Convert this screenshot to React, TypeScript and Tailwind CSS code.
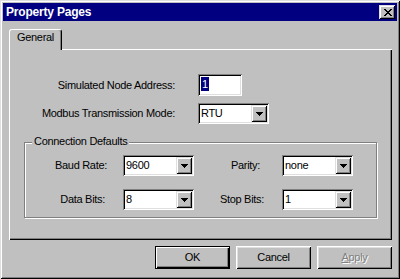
import React from "react";

const sunken =
  "shadow-[inset_1px_1px_0_#808080,inset_-1px_-1px_0_#ffffff,inset_2px_2px_0_#000000,inset_-2px_-2px_0_#dfdfdf]";
const raised =
  "shadow-[inset_1px_1px_0_#dfdfdf,inset_-1px_-1px_0_#000000,inset_2px_2px_0_#ffffff,inset_-2px_-2px_0_#808080]";
const btnBevel =
  "shadow-[inset_1px_1px_0_#ffffff,inset_-1px_-1px_0_#000000,inset_2px_2px_0_#dfdfdf,inset_-2px_-2px_0_#808080]";

function Tri() {
  return (
    <svg width="7" height="4" viewBox="0 0 7 4" shapeRendering="crispEdges">
      <rect x="0" y="0" width="7" height="1" fill="#000" />
      <rect x="1" y="1" width="5" height="1" fill="#000" />
      <rect x="2" y="2" width="3" height="1" fill="#000" />
      <rect x="3" y="3" width="1" height="1" fill="#000" />
    </svg>
  );
}

function CloseX() {
  const rows = [
    [0, 1, 6, 7],
    [1, 2, 5, 6],
    [2, 3, 4, 5],
    [3, 4],
    [2, 3, 4, 5],
    [1, 2, 5, 6],
    [0, 1, 6, 7],
  ];
  return (
    <svg width="8" height="7" viewBox="0 0 8 7" shapeRendering="crispEdges">
      {rows.map((r, y) =>
        r.map((x) => <rect key={`${x}-${y}`} x={x} y={y} width="1" height="1" fill="#000" />)
      )}
    </svg>
  );
}

function Combo({ value }: { value: string }) {
  return (
    <div className={`flex h-[21px] w-[71px] shrink-0 bg-white p-[2px] ${sunken}`}>
      <div className="flex-1 pl-[1px] leading-[17px]">{value}</div>
      <div className={`flex h-full w-[16px] items-center justify-center bg-[#c0c0c0] ${raised}`}>
        <Tri />
      </div>
    </div>
  );
}

export default function App() {
  return (
    <div
      className={`flex h-[279px] w-[400px] flex-col bg-[#c0c0c0] p-[3px] font-['Liberation_Sans',Arial,sans-serif] text-[11px] tracking-[-0.3px] text-black ${raised}`}
    >
      {/* Title bar */}
      <div className="flex h-[18px] items-center bg-[#000080] pl-[3px] pr-[2px]">
        <span className="flex-1 text-[12px] font-bold leading-[18px] tracking-[-0.2px] text-white">
          Property Pages
        </span>
        <div className={`flex h-[14px] w-[16px] items-center justify-center bg-[#c0c0c0] pl-[1px] ${raised}`}>
          <CloseX />
        </div>
      </div>

      <div className="ml-[6px] mt-[8px] flex w-[383px] flex-col">
        {/* Tab */}
        <div className="relative z-10 -mb-px h-[21px] w-[53px] rounded-t-[3px] border-l border-r border-t border-l-white border-r-black border-t-white bg-[#c0c0c0] pt-[1px] text-center leading-[13px] shadow-[inset_-1px_0_0_#808080]">
          General
        </div>

        {/* Panel */}
        <div className="flex h-[191px] flex-col pt-[25px] shadow-[inset_1px_1px_0_#ffffff,inset_-1px_-1px_0_#000000,inset_-2px_-2px_0_#808080]">
          <div className="flex h-[22px] items-center">
            <div className="w-[166px] text-right">Simulated Node Address:</div>
            <div className={`ml-[23px] h-[22px] w-[44px] bg-white p-[2px] ${sunken}`}>
              <span className="ml-[1px] inline-block h-[14px] bg-[#000080] px-[1px] leading-[14px] text-white">
                1
              </span>
            </div>
          </div>
          <div className="mt-[7px] flex h-[21px] items-center">
            <div className="w-[166px] text-right">Modbus Transmission Mode:</div>
            <div className="ml-[23px]">
              <Combo value="RTU" />
            </div>
          </div>

          {/* Group box */}
          <div className="relative ml-[15px] mt-[18px] h-[76px] w-[353px] border border-[#808080] pt-[12px] shadow-[inset_1px_1px_0_#ffffff,1px_1px_0_#ffffff]">
            <div className="absolute left-[7px] top-[-8px] bg-[#c0c0c0] px-[2px] leading-[13px]">
              Connection Defaults
            </div>
            <div className="flex h-[21px] items-center">
              <div className="w-[82px] text-right">Baud Rate:</div>
              <div className="ml-[16px]">
                <Combo value="9600" />
              </div>
              <div className="w-[66px] text-right">Parity:</div>
              <div className="ml-[22px]">
                <Combo value="none" />
              </div>
            </div>
            <div className="mt-[13px] flex h-[21px] items-center">
              <div className="w-[80px] text-right">Data Bits:</div>
              <div className="ml-[18px]">
                <Combo value="8" />
              </div>
              <div className="w-[70px] text-right">Stop Bits:</div>
              <div className="ml-[18px]">
                <Combo value="1" />
              </div>
            </div>
          </div>
        </div>

        {/* Buttons */}
        <div className="mt-[6px] flex justify-end gap-[6px]">
          <div className="flex h-[23px] w-[75px] items-center justify-center border border-black shadow-[inset_1px_1px_0_#ffffff,inset_-1px_-1px_0_#000000,inset_-2px_-2px_0_#808080]">
            OK
          </div>
          <div className={`flex h-[23px] w-[75px] items-center justify-center ${btnBevel}`}>Cancel</div>
          <div
            className={`flex h-[23px] w-[75px] items-center justify-center text-[#808080] [text-shadow:1px_1px_0_#ffffff] ${btnBevel}`}
          >
            <span>
              <u>A</u>pply
            </span>
          </div>
        </div>
      </div>
    </div>
  );
}
